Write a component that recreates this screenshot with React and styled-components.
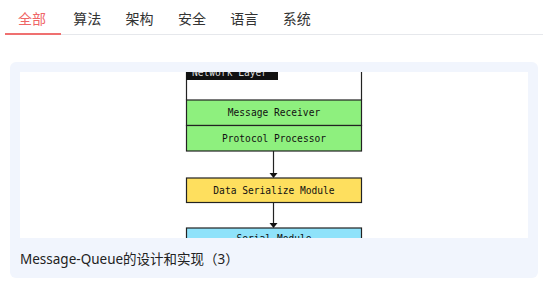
import React, { useState } from "react"
import styled, { createGlobalStyle } from "styled-components"

const tabs = ["全部", "算法", "架构", "安全", "语言", "系统"]

const posts = [
  {
    title: "Message-Queue的设计和实现（3）",
  },
]

const GlobalStyle = createGlobalStyle`
  body {
    margin: 0;
    background: #fff;
    font-family: "Noto Sans", "Noto Sans CJK SC", sans-serif;
  }
`

const Page = styled.div`
  width: 548px;
  min-height: 285px;
`

const TabBar = styled.ul`
  display: flex;
  margin: 0 5px;
  padding: 0;
  height: 34px;
  border-bottom: 1px solid #e6e8ec;
  list-style: none;
`

const Tab = styled.li`
  position: relative;
  padding: 9px 12.2px 0;
  font-size: 14px;
  line-height: 20px;
  color: ${p => (p.$active ? "#ef6666" : "#333")};
  cursor: pointer;
  &:first-child {
    padding-left: 13px;
    padding-right: 15px;
  }
  &:after {
    content: "";
    position: absolute;
    left: 0;
    right: 0;
    bottom: -1px;
    height: 2px;
    background: ${p => (p.$active ? "#ef7070" : "transparent")};
  }
`

const List = styled.div`
  margin: 27px 10px 0;
`

const Card = styled.div`
  background: #f1f5fd;
  border-radius: 6px;
  padding: 10px 10px 0;
`

const Cover = styled.div`
  height: 166px;
  background: #fff;
  overflow: hidden;
  svg {
    display: block;
  }
`

const Title = styled.div`
  height: 40px;
  display: flex;
  align-items: center;
  font-size: 13.5px;
  color: #222;
`

const mono = { fontFamily: "'DejaVu Sans Mono', monospace", fontSize: 9.6 }

const Diagram = () => (
  <svg width="508" height="166" viewBox="0 0 508 166">
    <g stroke="#222" strokeWidth="1.2">
      <line x1="166.5" y1="0" x2="166.5" y2="28" />
      <line x1="341.5" y1="0" x2="341.5" y2="28" />
      <rect x="166.5" y="28" width="175" height="25.5" fill="#8ef07e" />
      <rect x="166.5" y="53.5" width="175" height="25.5" fill="#8ef07e" />
      <line x1="253.5" y1="79" x2="253.5" y2="102" />
      <rect x="166.5" y="106" width="175" height="24.5" fill="#fedf5e" />
      <line x1="253.5" y1="130.5" x2="253.5" y2="151" />
      <rect x="166.5" y="156" width="175" height="20" fill="#8fe2fa" />
    </g>
    <rect x="166" y="0" width="92" height="8" fill="#111" />
    <text x="172" y="4" fill="#ddd" style={mono}>Network Layer</text>
    <path d="M249.5 101 L257.5 101 L253.5 106 Z" fill="#111" />
    <path d="M249.5 151 L257.5 151 L253.5 156 Z" fill="#111" />
    <g fill="#111" textAnchor="middle" style={mono}>
      <text x="254" y="44">Message Receiver</text>
      <text x="254" y="70">Protocol Processor</text>
      <text x="254" y="122">Data Serialize Module</text>
      <text x="254" y="170">Serial Module</text>
    </g>
  </svg>
)

const App = () => {
  const [current, setCurrent] = useState(0)

  return (
    <Page>
      <GlobalStyle />
      <TabBar>
        {tabs.map((tab, index) => (
          <Tab key={tab} $active={current === index} onClick={() => setCurrent(index)}>
            {tab}
          </Tab>
        ))}
      </TabBar>
      <List>
        {posts.map((post, index) => (
          <Card key={index}>
            <Cover>
              <Diagram />
            </Cover>
            <Title>{post.title}</Title>
          </Card>
        ))}
      </List>
    </Page>
  )
}

export default App
